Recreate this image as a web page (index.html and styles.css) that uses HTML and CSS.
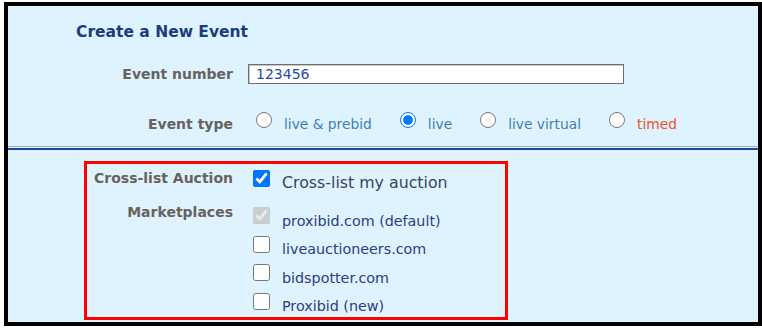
FILE: index.html
```html
<!DOCTYPE html>
<html lang="en">
<head>
    <meta charset="UTF-8">
    <title>Create a New Event</title>
    <link rel="stylesheet" href="styles.css">
</head>
<body>

<div class="frame">
    <!-- Event basics -->
    <div class="top">
        <h2 class="title">Create a New Event</h2>
        <div class="row num-row">
            <label class="lbl" for="eventNumber">Event number</label>
            <input type="text" id="eventNumber" class="num" value="123456">
        </div>
        <div class="row type-row">
            <span class="lbl">Event type</span>
            <div class="radios">
                <label class="opt"><input type="radio" name="etype"><span>live &amp; prebid</span></label>
                <label class="opt"><input type="radio" name="etype" checked><span>live</span></label>
                <label class="opt"><input type="radio" name="etype"><span>live virtual</span></label>
                <label class="opt timed"><input type="radio" name="etype"><span>timed</span></label>
            </div>
        </div>
    </div>

    <div class="divider"></div>

    <!-- Cross-listing -->
    <div class="bottom">
        <div class="xlist">
            <div class="row xrow">
                <span class="lbl">Cross-list Auction</span>
                <label class="chk big"><input type="checkbox" checked><span>Cross-list my auction</span></label>
            </div>
            <div class="row mrow">
                <span class="lbl">Marketplaces</span>
                <div class="markets">
                    <label class="chk"><input type="checkbox" checked disabled><span>proxibid.com (default)</span></label>
                    <label class="chk"><input type="checkbox"><span>liveauctioneers.com</span></label>
                    <label class="chk"><input type="checkbox"><span>bidspotter.com</span></label>
                    <label class="chk"><input type="checkbox"><span>Proxibid (new)</span></label>
                </div>
            </div>
        </div>
    </div>
</div>

</body>
</html>
```

FILE: styles.css
```css
body { margin: 0; font-family: "DejaVu Sans", Verdana, sans-serif; background: #fff; }
.frame { margin: 2px 0 0 4px; width: 750px; height: 316px; border: 4px solid #000; background: #dff3ff; }
.top { height: 140px; }
.title { margin: 0; padding: 16px 0 0 68px; font-size: 15.5px; line-height: 20px; color: #1a3c7c; }
.row { display: flex; align-items: flex-start; }
.lbl { width: 225px; margin-right: 15px; text-align: right; font-size: 14px; line-height: 17px; font-weight: bold; color: #68625d; }
.num-row { margin-top: 22px; height: 20px; align-items: center; }
.num { box-sizing: border-box; width: 376px; height: 20px; padding: 0 4px 0 7px; border: 1px solid #6e6e6e; box-shadow: inset 1px 1px 0 #c9c9c9; font-family: inherit; font-size: 14px; color: #2a4aa0; }
.type-row { margin-top: 28px; }
.type-row .lbl { padding-top: 4px; }
.radios { display: flex; }
.opt { display: flex; align-items: flex-start; font-size: 13.8px; line-height: 17px; color: #3f7fb5; margin-right: 20px; }
.opt input { width: 16px; height: 16px; margin: 0 12px 0 8px; }
.opt span { padding-top: 4px; }
.timed { color: #f0522c; }
.divider { height: 1px; border-top: 1px solid #9fb0bb; border-bottom: 2px solid #1c4b9e; }
.bottom { padding: 11px 0 0 76px; }
.xlist { width: 418px; height: 153px; border: 3px solid #f00; }
.xlist .lbl { width: 146px; }
.xrow { margin-top: 6px; }
.chk { display: flex; align-items: flex-start; font-size: 14.3px; line-height: 17px; color: #2b3d80; }
.chk input { width: 17px; height: 17px; margin: 0 12px 0 5px; }
.big { font-size: 15.8px; line-height: 20px; color: #3a4260; }
.big span { margin-top: 3px; }
.mrow { margin-top: 14px; }
.mrow .lbl { margin-top: -3px; }
.markets { display: flex; flex-direction: column; }
.markets .chk { height: 28.5px; }
.markets .chk span { padding-top: 5.5px; }
```
